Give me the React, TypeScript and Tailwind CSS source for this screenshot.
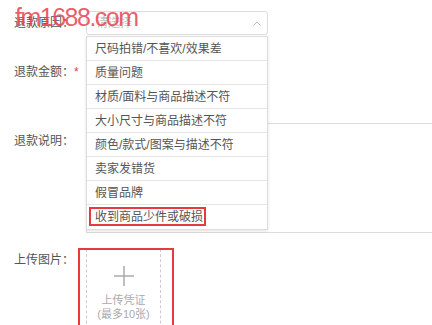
import React from 'react';

const reasons = [
  '尺码拍错/不喜欢/效果差',
  '质量问题',
  '材质/面料与商品描述不符',
  '大小尺寸与商品描述不符',
  '颜色/款式/图案与描述不符',
  '卖家发错货',
  '假冒品牌',
  '收到商品少件或破损',
];

const font = { fontFamily: '"Liberation Sans", "Noto Sans CJK SC", sans-serif' };

export default function App() {
  return (
    <div className="relative w-[432px] h-[325px] overflow-hidden bg-white text-[12px] text-[#555]" style={font}>
      {/* watermark */}
      <div className="absolute left-[15px] top-[2px] z-30 text-[25px] leading-[30px] tracking-[-1.5px] text-[#e8414e]/85 pointer-events-none">
        fm1688.com
      </div>

      <div className="pl-[14px] pt-[11px]">
        {/* 退款原因 */}
        <div className="flex">
          <label className="w-[72px] shrink-0 leading-[24px]">退款原因：</label>
          <div className="relative z-20">
            <div className="flex items-center justify-between w-[182px] h-[24px] border border-[#dcdcdc] rounded-[3px] pl-[9px] pr-[6px]">
              <span className="text-[#c0c0c0]">请选择</span>
              <svg width="8" height="5" viewBox="0 0 8 5" fill="none">
                <path d="M0.5 4.5L4 1L7.5 4.5" stroke="#bbb" strokeWidth="1" />
              </svg>
            </div>
            <ul className="absolute left-0 top-[25px] w-[182px] bg-white border border-[#dedede] shadow-[0_1px_3px_rgba(0,0,0,0.12)]">
              {reasons.map((r, i) => (
                <li
                  key={r}
                  className={`relative h-[24px] leading-[24px] pl-[8px] text-[#555] ${i < reasons.length - 1 ? 'border-b border-[#e8e8e8]' : ''}`}
                >
                  {r}
                  {i === reasons.length - 1 && (
                    <span className="absolute left-[2px] top-[2px] w-[117px] h-[19px] border-2 border-[#e53a3f]" />
                  )}
                </li>
              ))}
            </ul>
          </div>
        </div>

        {/* 退款金额 */}
        <div className="flex mt-[25px]">
          <label className="w-[72px] shrink-0 leading-[24px]">
            退款金额：<span className="text-[#e53a3f]">*</span>
          </label>
          <input className="w-[120px] h-[24px] border border-[#dcdcdc]" />
        </div>

        {/* 退款说明 */}
        <div className="flex mt-[39px]">
          <label className="w-[72px] shrink-0 leading-[24px] mt-[6px]">退款说明：</label>
          <textarea className="w-[400px] h-[110px] border border-[#dcdcdc] resize-none shrink-0" />
        </div>

        {/* 上传图片 */}
        <div className="flex mt-[15px]">
          <label className="w-[72px] shrink-0 leading-[24px]">上传图片：</label>
          <div className="relative">
            <div className="flex flex-col items-center w-[75px] h-[90px] mt-[1px] border border-dashed border-[#cfc8dc] text-[#aaa]">
              <svg width="20" height="20" viewBox="0 0 20 20" className="mt-[16px]">
                <path d="M10 0V20M0 10H20" stroke="#aaa" strokeWidth="1.5" />
              </svg>
              <span className="mt-[7px] text-[11px] leading-[14px]">上传凭证</span>
              <span className="text-[11px] leading-[14px]">(最多10张)</span>
            </div>
            <span className="absolute left-[-8px] top-0 w-[96px] h-[100px] border-2 border-[#e53a3f]" />
          </div>
        </div>
      </div>
    </div>
  );
}
